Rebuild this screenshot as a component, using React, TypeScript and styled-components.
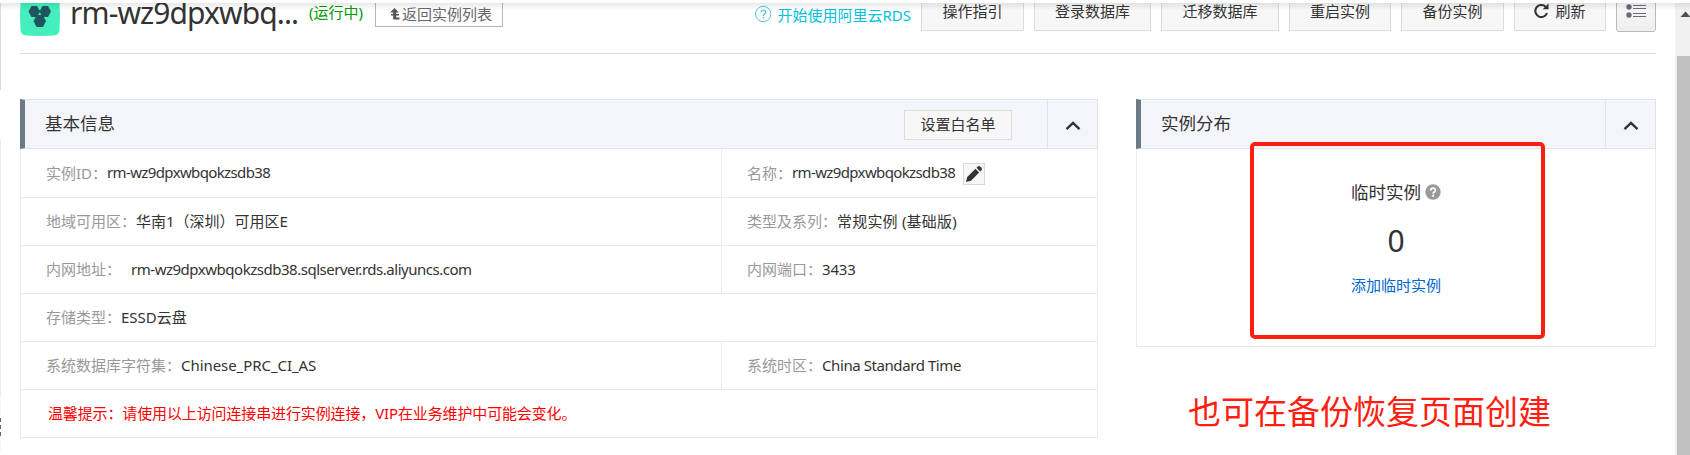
import React from "react";
import styled, { createGlobalStyle } from "styled-components";

const GlobalStyle = createGlobalStyle`
  * { box-sizing: border-box; }
  body {
    margin: 0;
    background: #fff;
    overflow: hidden;
    font-family: "Noto Sans", "Noto Sans CJK SC", sans-serif;
    font-size: 15px;
    color: #333;
  }
`;

const Page = styled.div`
  display: flex;
  width: 1690px;
  height: 455px;
  overflow: hidden;
  white-space: nowrap;
`;

const NavEdge = styled.div`
  flex: none;
  display: flex;
  flex-direction: column;
  width: 1px;
  padding-top: 3px;
`;

const EdgePart = styled.span<{ $h: number; $color: string }>`
  flex: none;
  height: ${(p) => p.$h}px;
  background: ${(p) => p.$color};
`;

const Main = styled.main`
  flex: none;
  width: 1674px;
`;

const TopShadow = styled.div`
  height: 7px;
  margin: 3px -15px -7px -1px;
  position: relative;
  background: linear-gradient(rgba(0, 0, 0, 0.09), rgba(0, 0, 0, 0));
`;

const Header = styled.header`
  display: flex;
  align-items: flex-start;
  height: 51px;
  margin: 0 19px 0 19px;
  border-bottom: 1px solid #dcdede;
  overflow: hidden;
`;

const Logo = styled.svg`
  flex: none;
  width: 40px;
  height: 40px;
  margin-top: -7px;
`;

const Title = styled.h1`
  width: 239px;
  margin: -10px 0 0 10px;
  font-size: 30px;
  font-weight: 400;
  line-height: 40px;
  letter-spacing: -0.9px;
`;

const Status = styled.span`
  width: 66px;
  line-height: 19px;
  color: #090;
`;

const BackButton = styled.button`
  display: flex;
  align-items: center;
  gap: 2px;
  width: 128px;
  height: 30px;
  margin-top: -6px;
  padding: 4px 0 0 14px;
  border: 1px solid #b5b5b5;
  background: #fff;
  color: #666;
  font: inherit;
  line-height: 20px;
`;

const HelpLink = styled.a`
  display: flex;
  align-items: center;
  gap: 6px;
  height: 22px;
  margin: 0 10px 0 auto;
  color: #00c1de;
  width: 156px;
`;

const Tools = styled.div`
  display: flex;
  gap: 10px;
  margin-top: -12px;
`;

const ToolButton = styled.button<{ $w: number }>`
  display: flex;
  align-items: center;
  justify-content: center;
  gap: 6px;
  width: ${(p) => p.$w}px;
  height: 40px;
  padding: 0 0 2px;
  border: 1px solid #dcdcdc;
  background: #f7f7f7;
  color: #333;
  font: inherit;
`;

const ListButton = styled(ToolButton)`
  height: 41px;
  padding-bottom: 9px;
  border-color: #bbb;
  border-radius: 3px;
  background: linear-gradient(#fdfdfd, #eee);
`;

const Panels = styled.div`
  display: flex;
  align-items: flex-start;
  gap: 38px;
  margin: 45px 18px 0 19px;
`;

const Panel = styled.section<{ $w: number }>`
  width: ${(p) => p.$w}px;
`;

const PanelHead = styled.div`
  display: flex;
  align-items: center;
  height: 50px;
  border: 1px solid #dfe5ea;
  border-left: 5px solid #6d7984;
  background: #f4f5fa;
`;

const PanelTitle = styled.h2`
  flex: 1;
  margin: 0 0 2px 20px;
  font-size: 17.5px;
  font-weight: 400;
  line-height: 24px;
`;

const WhitelistButton = styled.button`
  width: 108px;
  height: 30px;
  margin: 1px 35px 0 0;
  padding: 0 0 2px;
  border: 1px solid #dcdcdc;
  background: #f7f7f7;
  color: #333;
  font: inherit;
`;

const Collapse = styled.span`
  display: flex;
  align-items: center;
  justify-content: center;
  width: 50px;
  height: 48px;
  padding: 3px 0 0 1px;
  border-left: 1px solid #dfe5ea;
`;

const Table = styled.div`
  border: 1px solid #ebebeb;
  border-top: 0;
`;

const Row = styled.div`
  display: flex;
  height: 48px;
  & + & {
    border-top: 1px solid #ebebeb;
  }
`;

const Cell = styled.div<{ $w?: number }>`
  display: flex;
  align-items: center;
  width: ${(p) => (p.$w ? `${p.$w}px` : "auto")};
  padding: 0 0 2px 25px;
  & + & {
    border-left: 1px solid #ebebeb;
  }
`;

const Label = styled.span`
  color: #999;
`;

const Value = styled.span<{ $ls?: number; $gap?: number }>`
  margin-left: ${(p) => p.$gap || 0}px;
  letter-spacing: ${(p) => p.$ls || 0}px;
`;

const Tip = styled.span`
  margin-left: 2px;
  color: #f00;
  letter-spacing: -0.13px;
`;

const EditButton = styled.span`
  display: flex;
  align-items: center;
  justify-content: center;
  width: 22px;
  height: 22px;
  margin: 4px 0 0 8px;
  border: 1px solid #d9d9d9;
  background: #f7f7f7;
`;

const Distribution = styled.div`
  display: flex;
  flex-direction: column;
  align-items: center;
  height: 198px;
  border: 1px solid #ebebeb;
  border-top: 0;
`;

const DistName = styled.div`
  display: flex;
  align-items: center;
  gap: 4px;
  margin-top: 31px;
  font-size: 17.5px;
  line-height: 24px;
`;

const DistCount = styled.div`
  margin-top: 17px;
  font-size: 30px;
  line-height: 40px;
`;

const DistLink = styled.a`
  margin-top: 14px;
  line-height: 20px;
  color: #06c;
`;

const Highlight = styled.div`
  position: absolute;
  left: 1250px;
  top: 142px;
  width: 295px;
  height: 197px;
  border: 4px solid #ff1e10;
  border-radius: 5px;
`;

const Note = styled.div`
  position: absolute;
  left: 1188px;
  top: 389px;
  font-size: 33px;
  line-height: 46px;
  color: #ff1e10;
`;

const Scrollbar = styled.div`
  display: flex;
  flex-direction: column;
  width: 15px;
  height: 452px;
  margin-top: 3px;
  padding-left: 2px;
  background: #f1f1f1;
`;

const ArrowBox = styled.svg`
  flex: none;
  width: 13px;
  height: 53px;
`;

const Thumb = styled.div`
  flex: 1;
  background: #c1c1c1;
`;

const Chevron = () => (
  <svg width="16" height="10" viewBox="0 0 16 10">
    <path d="M1.500 8.200 8 2l6.500 6.200" fill="none" stroke="#333" strokeWidth="2.400" />
  </svg>
);

export default function App() {
  return (
    <>
      <GlobalStyle />
      <Page>
        <NavEdge>
          <EdgePart $h={87} $color="#d9deea" />
          <EdgePart $h={50} $color="#fff" />
          <EdgePart $h={257} $color="#e9ecf3" />
          <EdgePart $h={21} $color="#f7f8fa" />
          <EdgePart $h={4} $color="#56667b" />
          <EdgePart $h={3} $color="#fff" />
          <EdgePart $h={4} $color="#56667b" />
          <EdgePart $h={3} $color="#fff" />
          <EdgePart $h={4} $color="#56667b" />
          <EdgePart $h={16} $color="#f7f8fa" />
        </NavEdge>
        <Main>
          <TopShadow />
          <Header>
            <Logo viewBox="0 0 40 40">
              <path d="M6 0h28q5 0 5.500 6l.5 14-.5 14q-.5 5-5.500 5.500L20 40 6 39.500Q1 39 .5 34L0 20 .5 6Q1 0 6 0z" fill="#44efbd" />
              <g fill="#1f5560">
                <path d="M11.500 10h5.500l3 5.500-3 5.500h-5.500l-3-5.500z" />
                <path d="M22.500 10h5.500l3 5.500-3 5.500h-5.500l-3-5.500z" />
                <path d="M16.500 19.500h6.500l3 5.500-3 6h-6.500l-3-6z" />
                <path d="M16 14h7.500v8H16z" />
              </g>
              <path d="M19.700 16.200l1.700 2.800H18z" fill="#44efbd" />
            </Logo>
            <Title>rm-wz9dpxwbq...</Title>
            <Status>(运行中)</Status>
            <BackButton>
              <svg width="10" height="12" viewBox="0 0 10 12">
                <path d="M4.500 0 9 4.500H6.200V6H9v1.500H6.200V9.500H9.500V11.500H3.200V7.500H1V6h2.200V4.500H0z" fill="#555" />
              </svg>
              返回实例列表
            </BackButton>
            <HelpLink>
              <svg width="18" height="18" viewBox="0 0 18 18" fill="none" stroke="#45bbdc">
                <circle cx="9" cy="9" r="8.400" />
                <path d="M6.500 7.200C6.500 3.700 11.600 3.900 11.600 7c0 2-2.500 2-2.500 4.200" strokeWidth="1.300" />
                <path d="M9.100 12.300v1.500" strokeWidth="1.500" />
              </svg>
              开始使用阿里云RDS
            </HelpLink>
            <Tools>
              <ToolButton $w={103}>操作指引</ToolButton>
              <ToolButton $w={117}>登录数据库</ToolButton>
              <ToolButton $w={118}>迁移数据库</ToolButton>
              <ToolButton $w={102}>重启实例</ToolButton>
              <ToolButton $w={103}>备份实例</ToolButton>
              <ToolButton $w={92}>
                <svg width="15" height="16" viewBox="0 0 15 16">
                  <path d="M13 11A6 6 0 1 1 11.600 4.800" fill="none" stroke="#333" strokeWidth="2.100" />
                  <path d="M14.500 1.600v5.700H8.700z" fill="#333" />
                </svg>
                刷新
              </ToolButton>
              <ListButton $w={40}>
                <svg width="20" height="22" viewBox="0 0 20 22" fill="#6b6880">
                  <circle cx="3" cy="3" r="2.700" />
                  <circle cx="3" cy="11" r="2.700" />
                  <circle cx="3" cy="19" r="2.700" />
                  <path d="M7 1h13v1H7zM7 4h13v1H7zM7 9h13v1H7zM7 12h13v1H7zM7 17h13v1H7zM7 20h13v1H7z" />
                </svg>
              </ListButton>
            </Tools>
          </Header>
          <Panels>
            <Panel $w={1078}>
              <PanelHead>
                <PanelTitle>基本信息</PanelTitle>
                <WhitelistButton>设置白名单</WhitelistButton>
                <Collapse><Chevron /></Collapse>
              </PanelHead>
              <Table>
                <Row>
                  <Cell $w={700}><Label>实例ID：</Label><Value $ls={-0.63}>rm-wz9dpxwbqokzsdb38</Value></Cell>
                  <Cell>
                    <Label>名称：</Label><Value $ls={-0.63}>rm-wz9dpxwbqokzsdb38</Value>
                    <EditButton>
                      <svg width="16" height="16" viewBox="0 0 16 16" fill="#333">
                        <path d="M0 16l1.200-5L9.500 2.800l3.700 3.700L5 14.800zM10.500 1.800 11.800.6q1.200-1 2.400 0l1.200 1.200q1 1.200 0 2.400l-1.200 1.300z" />
                      </svg>
                    </EditButton>
                  </Cell>
                </Row>
                <Row>
                  <Cell $w={700}><Label>地域可用区：</Label><Value>华南1（深圳）可用区E</Value></Cell>
                  <Cell><Label>类型及系列：</Label><Value $ls={0.2}>常规实例 (基础版)</Value></Cell>
                </Row>
                <Row>
                  <Cell $w={700}><Label>内网地址：</Label><Value $gap={10} $ls={-0.48}>rm-wz9dpxwbqokzsdb38.sqlserver.rds.aliyuncs.com</Value></Cell>
                  <Cell><Label>内网端口：</Label><Value $ls={-0.2}>3433</Value></Cell>
                </Row>
                <Row>
                  <Cell><Label>存储类型：</Label><Value>ESSD云盘</Value></Cell>
                </Row>
                <Row>
                  <Cell $w={700}><Label>系统数据库字符集：</Label><Value $ls={-0.06}>Chinese_PRC_CI_AS</Value></Cell>
                  <Cell><Label>系统时区：</Label><Value $ls={-0.42}>China Standard Time</Value></Cell>
                </Row>
                <Row>
                  <Cell><Tip>温馨提示：请使用以上访问连接串进行实例连接，VIP在业务维护中可能会变化。</Tip></Cell>
                </Row>
              </Table>
            </Panel>
            <Panel $w={520}>
              <PanelHead>
                <PanelTitle>实例分布</PanelTitle>
                <Collapse><Chevron /></Collapse>
              </PanelHead>
              <Distribution>
                <DistName>
                  临时实例
                  <svg width="16" height="16" viewBox="0 0 16 16">
                    <circle cx="8" cy="8" r="7.700" fill="#999" />
                    <path d="M5.800 6.500C5.800 3.400 10.400 3.500 10.400 6.200 10.400 8 8.100 7.900 8.100 9.800M8.100 10.800v1.900" fill="none" stroke="#fff" strokeWidth="1.800" />
                  </svg>
                </DistName>
                <DistCount>0</DistCount>
                <DistLink>添加临时实例</DistLink>
              </Distribution>
            </Panel>
          </Panels>
        </Main>
        <Scrollbar>
          <ArrowBox viewBox="0 0 13 53">
            <path d="M3.500 14 8.500 8.500l5 5.500z" fill="#505050" />
          </ArrowBox>
          <Thumb />
        </Scrollbar>
        <Highlight />
        <Note>也可在备份恢复页面创建</Note>
      </Page>
    </>
  );
}
